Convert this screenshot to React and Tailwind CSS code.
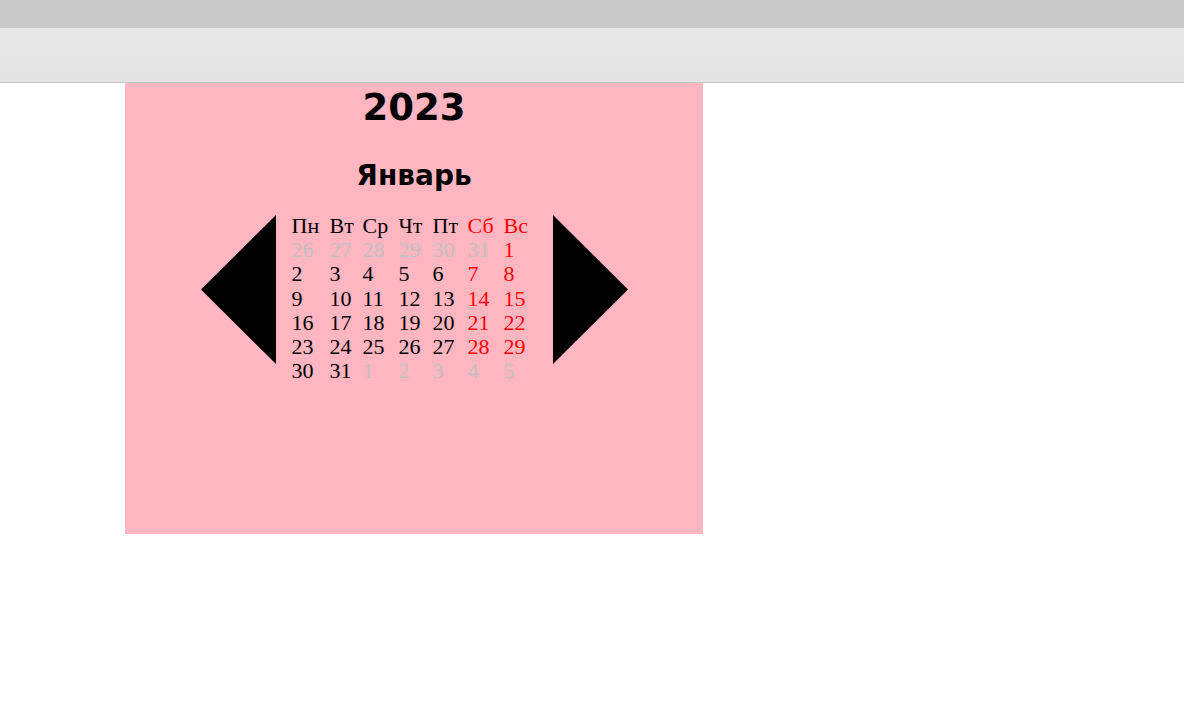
const days = ["Пн", "Вт", "Ср", "Чт", "Пт", "Сб", "Вс"];

function buildWeeks() {
  const cells = [];
  for (let d = 26; d <= 31; d++) cells.push({ n: d, other: true });
  for (let d = 1; d <= 31; d++) cells.push({ n: d, other: false });
  for (let d = 1; d <= 5; d++) cells.push({ n: d, other: true });
  const weeks = [];
  for (let i = 0; i < cells.length; i += 7) weeks.push(cells.slice(i, i + 7));
  return weeks;
}

function Arrow({ dir }) {
  const points = dir === "left" ? "75,0 0,74.5 75,149" : "0,0 75,74.5 0,149";
  return (
    <svg width="75" height="149" viewBox="0 0 75 149" className="mt-[3px] shrink-0">
      <polygon points={points} fill="#000" />
    </svg>
  );
}

function cellColor(cell, col) {
  if (cell.other) return "text-[#c0c0c0]";
  if (col >= 5) return "text-[#ff0000]";
  return "text-black";
}

export default function App() {
  const weeks = buildWeeks();

  return (
    <div className="min-h-[717px] bg-white">
      <div className="h-[28px] bg-[#c8c8c8]" />
      <div className="h-[55px] bg-gradient-to-b from-[#e8e8e8] to-[#e3e3e3] border-b border-[#c8c8c8]" />

      <div className="ml-[125px] w-[578px] h-[451px] bg-[#ffb6c1] pt-[9px]">
        <h1 className="text-center text-[37px] font-bold leading-[32px] text-black font-['DejaVu_Sans',sans-serif]">
          2023
        </h1>
        <h2 className="mt-[38px] text-center text-[28px] font-bold leading-[28px] text-black font-['DejaVu_Sans',sans-serif]">
          Январь
        </h2>

        <div className="mt-[22px] flex items-start justify-center gap-4">
          <Arrow dir="left" />
          <div className="pt-[2px] grid grid-cols-[38px_33px_36px_34px_35px_36px_33px] text-[22px] leading-[24.2px] font-['Liberation_Serif',serif]">
            {days.map((d, i) => (
              <div key={d} className={i >= 5 ? "text-[#ff0000]" : "text-black"}>
                {d}
              </div>
            ))}
            {weeks.map((week, w) =>
              week.map((cell, i) => (
                <div key={`${w}-${i}`} className={cellColor(cell, i)}>
                  {cell.n}
                </div>
              ))
            )}
          </div>
          <Arrow dir="right" />
        </div>
      </div>
    </div>
  );
}
